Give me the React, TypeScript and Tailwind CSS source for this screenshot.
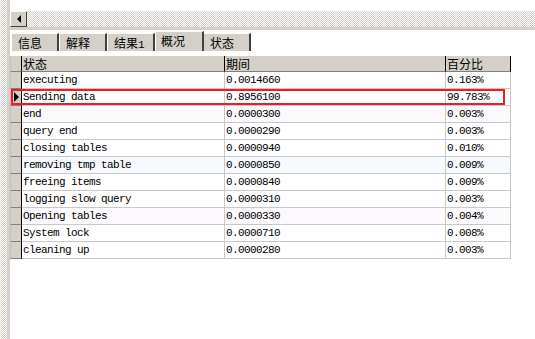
import React from "react";

const rows: { name: string; dur: string; pct: string; bg: string }[] = [
  { name: "executing", dur: "0.0014660", pct: "0.163%", bg: "bg-white" },
  { name: "Sending data", dur: "0.8956100", pct: "99.783%", bg: "bg-white" },
  { name: "end", dur: "0.0000300", pct: "0.003%", bg: "bg-[#fcf9fd]" },
  { name: "query end", dur: "0.0000290", pct: "0.003%", bg: "bg-white" },
  { name: "closing tables", dur: "0.0000940", pct: "0.010%", bg: "bg-white" },
  { name: "removing tmp table", dur: "0.0000850", pct: "0.009%", bg: "bg-[#f6f9fd]" },
  { name: "freeing items", dur: "0.0000840", pct: "0.009%", bg: "bg-white" },
  { name: "logging slow query", dur: "0.0000310", pct: "0.003%", bg: "bg-white" },
  { name: "Opening tables", dur: "0.0000330", pct: "0.004%", bg: "bg-[#fcf9fd]" },
  { name: "System lock", dur: "0.0000710", pct: "0.008%", bg: "bg-white" },
  { name: "cleaning up", dur: "0.0000280", pct: "0.003%", bg: "bg-white" },
];

const tabs = ["信息", "解释", "结果1", "概况", "状态"];

const checker =
  "bg-[repeating-conic-gradient(#d4d0c8_0%_25%,#ffffff_0%_50%)] bg-[length:2px_2px]";

const cjk = "font-['Noto_Sans_CJK_SC','Noto_Sans',sans-serif]";
const mono = "font-['Liberation_Mono',monospace] text-[11px] tracking-[-0.6px]";

export default function App() {
  return (
    <div className="w-[535px] h-[339px] bg-white flex overflow-hidden">
      <div className={`w-[7px] h-full ${checker}`} />
      <div className="w-[3px] h-full bg-[#d4d0c8]" />
      <div className="flex-1 flex flex-col">
        <div className="h-[11px]" />
        {/* horizontal scrollbar */}
        <div className="flex h-[16px]">
          <div className="w-[17px] h-[16px] bg-[#d4d0c8] border-t border-l border-t-white border-l-white border-b border-r border-b-[#404040] border-r-[#404040] flex items-center justify-center">
            <svg width="6" height="8" viewBox="0 0 6 8">
              <path d="M5 0 L1 4 L5 8 Z" fill="#000" />
            </svg>
          </div>
          <div className={`flex-1 ${checker}`} />
        </div>
        <div className="h-[3px] bg-[#d4d0c8]" />
        {/* tabs */}
        <div className="h-[21px] flex items-end pl-[1px] mb-[5px]">
          {tabs.map((t) => {
            const sel = t === "概况";
            return (
              <div
                key={t}
                className={`${cjk} text-[12px] leading-[18px] text-black bg-[#d4d0c8] border-t border-l border-t-white border-l-white border-r-2 border-r-[#404040] ${
                  sel ? "h-[20px] pl-[5px] w-[49px] -mr-[1px] z-10" : "h-[18px] pl-[6px] w-[48px]"
                }`}
              >
                {t === "结果1" ? (
                  <span>
                    结果<span className="font-['Liberation_Mono',monospace] text-[11px]">1</span>
                  </span>
                ) : (
                  t
                )}
              </div>
            );
          })}
        </div>
        {/* grid */}
        <div className="flex flex-col w-[501px]">
          <div className={`flex h-[16px] ${cjk} text-[12px] leading-[15px] text-black`}>
            <div className="w-[12px] bg-[#d4d0c8] border-r border-b border-r-black border-b-[#808080] border-l border-l-[#c0c0c0]" />
            <div className="w-[203px] bg-[#d4d0c8] border-r border-b border-r-black border-b-[#808080] pl-[1px]">状态</div>
            <div className="w-[221px] bg-[#d4d0c8] border-r border-b border-r-black border-b-[#808080] pl-[1px]">期间</div>
            <div className="w-[65px] bg-[#d4d0c8] border-r border-b border-r-black border-b-[#808080] pl-[1px]">百分比</div>
          </div>
          {rows.map((r, i) => (
            <div key={r.name} className={`relative flex h-[17px] ${mono} leading-[17px] text-black`}>
              <div className="w-[12px] bg-[#d4d0c8] border-l border-l-[#c0c0c0] border-r border-r-black border-b border-b-[#808080] flex items-center">
                {i === 1 && (
                  <svg width="6" height="10" viewBox="0 0 6 10" className="ml-[3px]">
                    <path d="M0 0 L5 5 L0 10 Z" fill="#000" />
                  </svg>
                )}
              </div>
              <div className={`w-[203px] ${r.bg} border-r border-b border-[#c8c8c8] pl-[1px]`}>{r.name}</div>
              <div className={`w-[221px] ${r.bg} border-r border-b border-[#c8c8c8] pl-[1px]`}>{r.dur}</div>
              <div className={`w-[65px] ${r.bg} border-r border-b border-[#c8c8c8] pl-[1px]`}>{r.pct}</div>
              {i === 1 && (
                <div className="absolute left-[1px] top-0 w-[494px] h-[16px] border-2 border-[#ee1c1c]" />
              )}
            </div>
          ))}
        </div>
      </div>
    </div>
  );
}
